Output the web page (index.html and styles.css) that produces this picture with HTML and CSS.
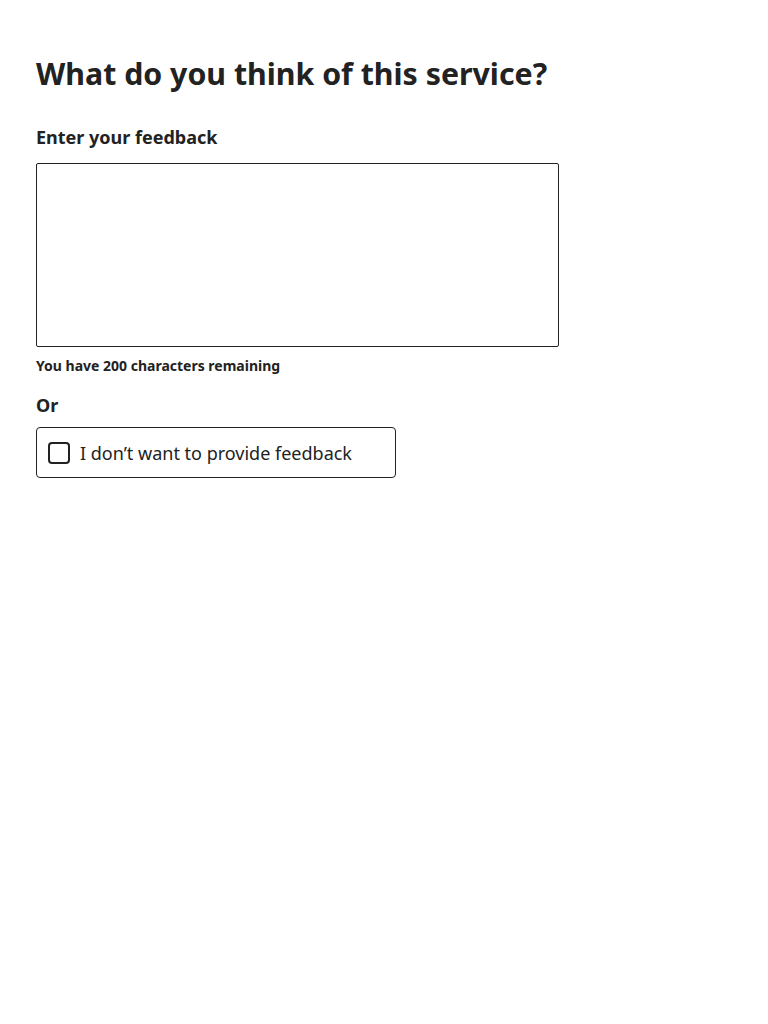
FILE: index.html
```html
<!DOCTYPE html>
<html lang="en">
<head>
  <meta charset="UTF-8">
  <title>Feedback</title>
  <link rel="stylesheet" href="styles.css">
</head>
<body>

<main class="page">
  <h1 class="title">What do you think of this service?</h1>

  <label class="label" for="feedback">Enter your feedback</label>
  <textarea id="feedback" class="textarea" maxlength="200"></textarea>
  <p class="hint">You have 200 characters remaining</p>

  <p class="or">Or</p>

  <label class="choice">
    <span class="box"></span>
    <span class="choice-text">I don’t want to provide feedback</span>
  </label>
</main>

</body>
</html>
```

FILE: styles.css
```css
body { margin: 0; background: #fff; color: #222; font-family: "Noto Sans", "Open Sans", sans-serif; }
.page { padding: 52px 36px; display: flex; flex-direction: column; align-items: flex-start; }
.title { margin: 0 0 28px; font-size: 30.3px; line-height: 44px; font-weight: 700; }
.label { font-size: 18px; font-weight: 700; line-height: 26px; margin-bottom: 13px; }
.textarea { box-sizing: border-box; width: 523px; height: 184px; border: 1px solid #222; border-radius: 2px; resize: none; margin: 0; padding: 8px; font: inherit; }
.hint { margin: 8px 0 0; font-size: 14px; font-weight: 700; line-height: 22px; }
.or { margin: 15px 0 0; font-size: 18px; font-weight: 700; line-height: 26px; }
.choice { box-sizing: border-box; width: 360px; height: 51px; margin-top: 9px; border: 1px solid #222; border-radius: 4px; display: flex; align-items: center; gap: 10px; padding: 0 11px; }
.box { box-sizing: border-box; width: 22px; height: 22px; border: 2px solid #222; border-radius: 4px; flex: none; }
.choice-text { font-size: 18px; line-height: 26px; }
```
